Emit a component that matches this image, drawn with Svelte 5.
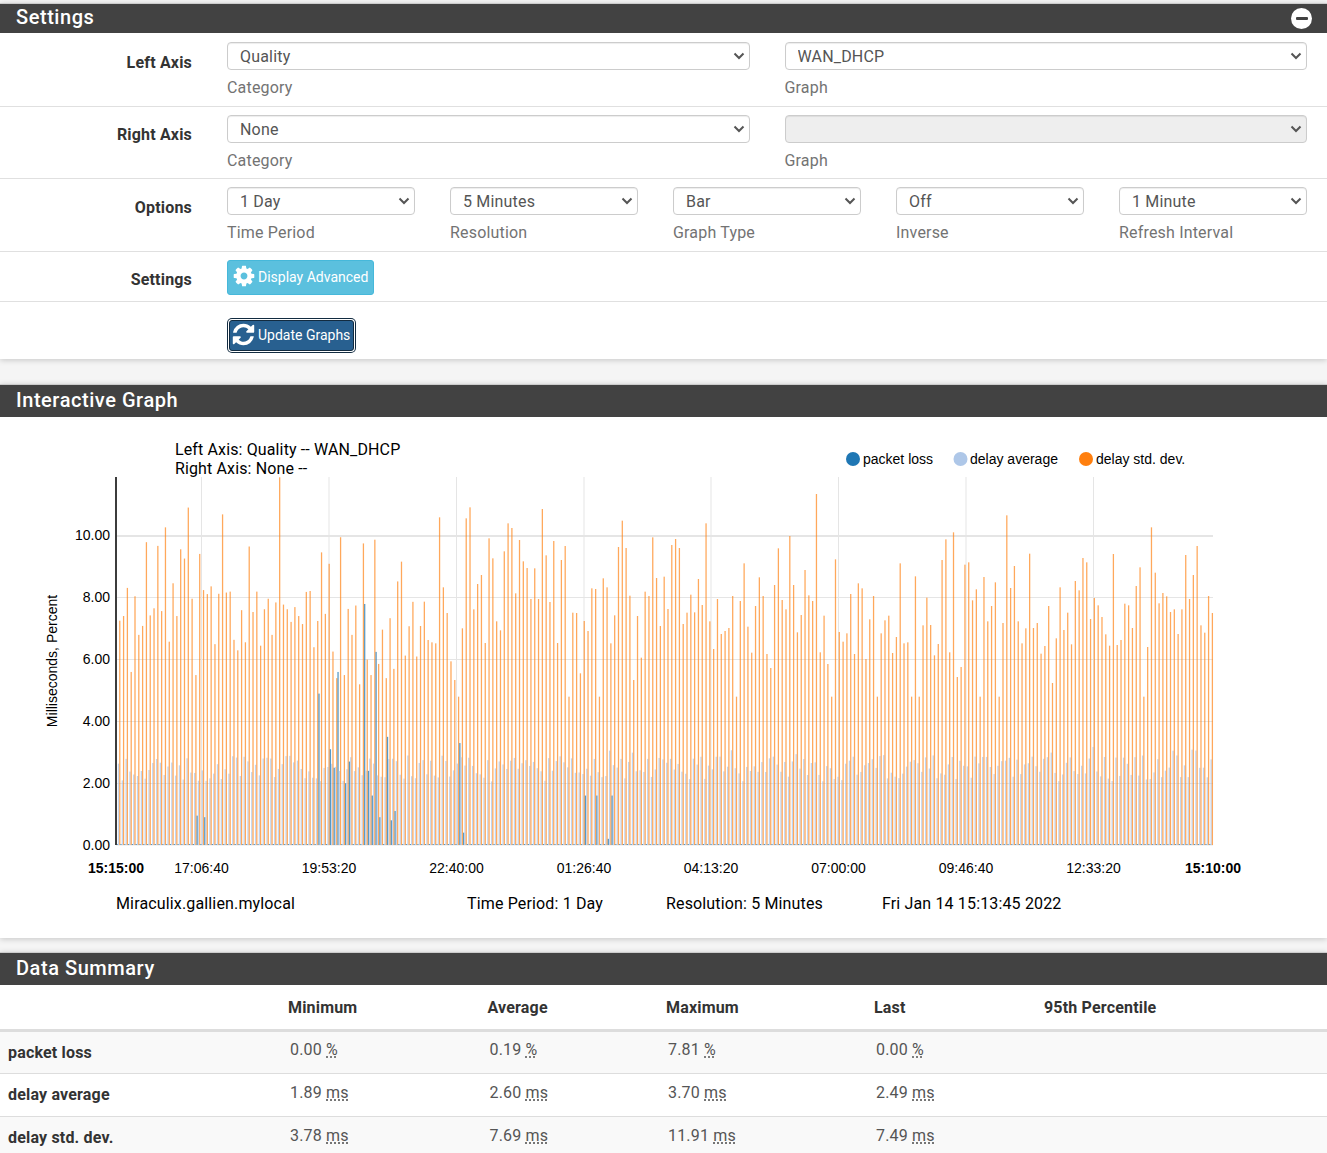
<script>
  const X0 = 116.6, STEP = 3.807, Y0 = 845, PX = 30.9, N = 288, TOP = 477;

  let seed = 20220114;
  function rnd() {
    seed = (seed + 0x6d2b79f5) | 0;
    let t = Math.imul(seed ^ (seed >>> 15), 1 | seed);
    t = (t + Math.imul(t ^ (t >>> 7), 61 | t)) ^ t;
    return ((t ^ (t >>> 14)) >>> 0) / 4294967296;
  }

  const firstOrange = [7.26,7.41,8.32,5.6,8.05,6.8,7.09,9.8,7.43,7.66,9.68,7.57,10.28,6.58,8.47,7.41,9.57,9.27,10.92,7.97,5.5,9.42,8.25,8.12,8.37,6.5,8.13,10.7,8.17,8.2,6.64,6.3,7.6,6.56,9.66,7.54,8.2,6.45,7.63,7.97,6.8,7.85,11.9,7.78,7.63,7.22,7.7,7.41,7.15,8.19,8.22,6.4,7.25,9.47,7.48,9.1,6.26,5.4,9.96,5.5,7.64,6.8,7.75,5.2,9.76,6.0,5.5,9.88,5.86,6.97,5.4,7.34,5.7,8.53,9.17,6.13,7.08,7.87,6.1];
  // Bar tops from index 79 on, 0 stands for a bar lower than the rest.
  const tops = [408,335,450,457,460,82,292,369,514,570,0,415,85,52,358,282,255,459,145,205,394,421,184,100,114,310,150,214,234,327,235,327,57,196,336,153,459,210,168,0,368,369,550,393,423,295,297,0,265,292,460,376,171,92,174,317,570,378,503,305,318,142,264,408,260,357,165,147,174,402,
    368,314,367,267,345,100,394,477,327,432,423,414,318,0,333,220,410,488,348,262,318,492,534,285,175,330,358,138,285,427,375,240,316,333,12,487,377,522,0,208,426,455,430,312,492,280,295,507,388,318,0,430,391,377,489,441,220,460,457,0,259,0,406,323,405,496,462,210,148,487,127,
    561,531,224,217,331,298,0,261,394,348,277,0,399,76,294,228,394,460,415,191,414,399,491,468,348,579,445,292,420,368,463,273,301,204,217,387,324,346,381,433,467,192,465,450,341,346,414,288,232,0,471,112,248,340,309,319,366,358,432,358,195,327,255,168,406,428,318,369];
  const orange = [...firstOrange, ...tops.map((y) => (1065 - (y || 620)) / 92.7)];
  const blues = { 199: 0.95, 203: 0.9, 318.5: 4.9, 330: 3.1, 334: 2.5, 338: 5.6, 345: 2.0, 349: 2.7, 363.5: 7.8, 367: 2.4, 371: 1.6, 376: 6.25, 380: 0.9, 387: 3.5, 391: 0.8, 395: 1.1, 459: 3.3, 462: 0.4, 585: 1.6, 595: 1.6, 610: 0.2, 614: 1.6 };

  const bars = [];
  for (let i = 0; i < N; i++) {
    const x = X0 + i * STEP;
    const g = 2.05 + rnd() * 0.85 + (rnd() > 0.9 ? 0.35 : 0);
    let b = 0;
    for (const k in blues) if (Math.abs(+k - x - 0.6) < STEP / 2) b = blues[k];
    bars.push({ x, b, g, o: orange[i] });
  }
  const h = (v) => Math.max(v * PX, 1);
  const W = 1.27;

  const yTicks = ['10.00', '8.00', '6.00', '4.00', '2.00', '0.00'];
  const yPos = [536, 597.5, 659.5, 721.5, 783.5, 845];
  const yText = [540, 602, 664, 726, 788, 849.5];
  const xTicks = [[201.5, '17:06:40'], [329, '19:53:20'], [456.5, '22:40:00'], [584, '01:26:40'], [711, '04:13:20'], [838.5, '07:00:00'], [966, '09:46:40'], [1093.5, '12:33:20']];

  const options = [['1 Day', 'Time Period'], ['5 Minutes', 'Resolution'], ['Bar', 'Graph Type'], ['Off', 'Inverse'], ['1 Minute', 'Refresh Interval']];
  const rows = [
    ['packet loss', '0.00', '0.19', '7.81', '0.00', '%'],
    ['delay average', '1.89', '2.60', '3.70', '2.49', 'ms'],
    ['delay std. dev.', '3.78', '7.69', '11.91', '7.49', 'ms']
  ];
</script>

<div class="page">
  <section class="panel first">
    <header class="title">
      <h2>Settings</h2>
      <span class="collapse" aria-label="Collapse"><i></i></span>
    </header>

    <div class="row r1">
      <div class="label">Left Axis</div>
      <div class="fields two">
        <div class="field"><select><option>Quality</option></select><span class="help">Category</span></div>
        <div class="field"><select><option>WAN_DHCP</option></select><span class="help">Graph</span></div>
      </div>
    </div>
    <div class="row r2">
      <div class="label">Right Axis</div>
      <div class="fields two">
        <div class="field"><select><option>None</option></select><span class="help">Category</span></div>
        <div class="field"><select class="off"><option></option></select><span class="help">Graph</span></div>
      </div>
    </div>
    <div class="row r3">
      <div class="label">Options</div>
      <div class="fields five">
        {#each options as [v, help]}
          <div class="field"><select><option>{v}</option></select><span class="help">{help}</span></div>
        {/each}
      </div>
    </div>
    <div class="row r4">
      <div class="label">Settings</div>
      <div class="fields">
        <button class="btn info">
          <svg viewBox="0 0 1792 1792" width="24" height="24"><path fill="currentColor" d="M1152 896q0-106-75-181t-181-75-181 75-75 181 75 181 181 75 181-75 75-181zm512-109v222q0 12-8 23t-20 13l-185 28q-19 54-39 91 35 50 107 138 10 12 10 25t-9 23q-27 37-99 108t-94 71q-12 0-26-9l-138-108q-44 23-91 38-16 136-29 186-7 28-36 28h-222q-14 0-24.500-8.500t-11.500-21.500l-28-184q-49-16-90-37l-141 107q-10 9-25 9-14 0-25-11-126-114-165-168-7-10-7-23 0-12 8-23 15-21 51-66.500t54-70.500q-27-50-41-99l-183-27q-13-2-21-12.500t-8-23.500v-222q0-12 8-23t19-13l186-28q14-46 39-92-40-57-107-138-10-12-10-24 0-10 9-23 26-36 98.500-107.500t94.500-71.500q13 0 26 10l138 107q44-23 91-38 16-136 29-186 7-28 36-28h222q14 0 24.500 8.500t11.500 21.500l28 184q49 16 90 37l142-107q9-9 24-9 13 0 25 10 129 119 165 170 7 8 7 22 0 12-8 23-15 21-51 66.500t-54 70.500q26 50 41 98l183 28q13 2 21 12.500t8 23.500z"/></svg>
          <span>Display Advanced</span>
        </button>
      </div>
    </div>
    <div class="row r5">
      <div class="label"></div>
      <div class="fields">
        <button class="btn primary">
          <svg viewBox="0 0 1792 1792" width="25" height="25"><path fill="currentColor" d="M1639 1056q0 5-1 7-64 268-268 434.500t-478 166.500q-146 0-282.500-55t-243.500-157l-129 129q-19 19-45 19t-45-19-19-45v-448q0-26 19-45t45-19h448q26 0 45 19t19 45-19 45l-137 137q71 66 161 102t187 36q134 0 250-65t186-179q11-17 53-117 8-23 30-23h192q13 0 22.500 9.500t9.500 22.500zm25-800v448q0 26-19 45t-45 19h-448q-26 0-45-19t-19-45 19-45l138-138q-148-137-349-137-134 0-250 65t-186 179q-11 17-53 117-8 23-30 23h-199q-13 0-22.500-9.500t-9.500-22.500v-7q65-268 270-434.500t480-166.500q146 0 284 55.500t245 156.500l130-129q19-19 45-19t45 19 19 45z"/></svg>
          <span>Update Graphs</span>
        </button>
      </div>
    </div>
  </section>

  <section class="panel graph">
    <header class="title"><h2>Interactive Graph</h2></header>
    <svg class="chart" viewBox="0 417 1327 521" width="1327" height="521">
      <text class="cap" x="175" y="455">Left Axis: Quality -- WAN_DHCP</text>
      <text class="cap" x="175" y="474">Right Axis: None --</text>

      <circle cx="853" cy="459" r="7" fill="#1f77b4" />
      <text class="ax" x="863" y="464">packet loss</text>
      <circle cx="960.500" cy="459" r="7" fill="#aec7e8" />
      <text class="ax" x="970" y="464">delay average</text>
      <circle cx="1086" cy="459" r="7" fill="#ff7f0e" />
      <text class="ax" x="1096" y="464">delay std. dev.</text>

      {#each yPos as y, i}
        <line x1="116" x2="1213" y1={y} y2={y} class="grid" class:thick={i === 0} />
        <text class="ax" x="110" y={yText[i]} text-anchor="end">{yTicks[i]}</text>
      {/each}
      {#each xTicks as [x, t]}
        <line x1={x} x2={x} y1={TOP} y2="845" class="grid" />
        <text class="ax" {x} y="873" text-anchor="middle">{t}</text>
      {/each}
      <text class="ax bold" x="116" y="873" text-anchor="middle">15:15:00</text>
      <text class="ax bold" x="1213" y="873" text-anchor="middle">15:10:00</text>

      <text class="ax" transform="translate(57 661) rotate(-90)" text-anchor="middle">Milliseconds, Percent</text>

      {#each bars as b}
        <rect x={b.x} y={Y0 - h(b.b)} width={W} height={h(b.b)} fill="#1f77b4" fill-opacity=".75" />
        <rect x={b.x + W} y={Y0 - h(b.g)} width={W} height={h(b.g)} fill="#aec7e8" fill-opacity=".75" />
        <rect x={b.x + 2 * W} y={Math.max(Y0 - h(b.o), TOP)} width={W} height={Math.min(h(b.o), Y0 - TOP)} fill="#ff7f0e" fill-opacity=".68" />
      {/each}
      <line x1="116" x2="116" y1={TOP} y2="845" class="axis" />

      <text class="foot" x="116" y="909">Miraculix.gallien.mylocal</text>
      <text class="foot" x="467" y="909">Time Period: 1 Day</text>
      <text class="foot" x="666" y="909">Resolution: 5 Minutes</text>
      <text class="foot" x="882" y="909">Fri Jan 14 15:13:45 2022</text>
    </svg>
  </section>

  <section class="panel summary">
    <header class="title"><h2>Data Summary</h2></header>
    <table>
      <colgroup>
        <col class="c1" /><col class="c2" /><col class="c3" /><col class="c4" /><col class="c5" /><col />
      </colgroup>
      <thead>
        <tr><th></th><th>Minimum</th><th>Average</th><th>Maximum</th><th>Last</th><th>95th Percentile</th></tr>
      </thead>
      <tbody>
        {#each rows as r}
          <tr>
            <th>{r[0]}</th>
            {#each r.slice(1, 5) as v}
              <td>{v} <abbr>{r[5]}</abbr></td>
            {/each}
            <td></td>
          </tr>
        {/each}
      </tbody>
    </table>
  </section>
</div>

<style>
  :global(body) {
    margin: 0;
    background: #f5f5f5;
    font-family: Roboto, "Liberation Sans", sans-serif;
    color: #333;
    letter-spacing: 0.18px;
  }
  .page {
    height: 1153px;
    overflow: hidden;
    padding-top: 3px;
    box-sizing: border-box;
  }
  .panel {
    background: #fff;
    box-shadow: 0 1px 6px rgba(0, 0, 0, 0.2);
  }
  .graph {
    margin-top: 25px;
  }
  .summary {
    margin-top: 14px;
  }
  .title {
    height: 33px;
    box-sizing: border-box;
    background: #424242;
    color: #fff;
    display: flex;
    align-items: center;
    justify-content: space-between;
    padding: 0 16px 3px;
    border-top: 1px solid #ccc;
  }
  .first .title {
    height: 30px;
    padding-bottom: 3px;
  }
  h2 {
    margin: 0;
    font-size: 20px;
    font-weight: 500;
    letter-spacing: 0.55px;
    line-height: 1;
  }
  .collapse {
    position: relative;
    top: 1px;
    width: 21px;
    height: 21px;
    border-radius: 50%;
    background: #fff;
    display: flex;
    align-items: center;
    justify-content: center;
    margin-right: -1px;
  }
  .collapse i {
    width: 12px;
    height: 3px;
    background: #424242;
    border-radius: 1px;
  }
  .row {
    display: flex;
    border-bottom: 1px solid #e0e0e0;
  }
  .r1 { height: 73px; }
  .r2 { height: 71px; }
  .r3 { height: 72px; }
  .r4 { height: 49px; }
  .r5 { height: 57px; border-bottom: 0; }
  .label {
    width: 192px;
    flex: none;
    text-align: right;
    font-weight: 700;
    font-size: 16px;
    line-height: 19px;
    padding-top: 19px;
    box-sizing: border-box;
  }
  .r1 .label { padding-top: 20px; }
  .r2 .label, .r4 .label { padding-top: 18px; }
  .fields {
    margin-left: 35px;
    margin-right: 20px;
    flex: 1;
    padding-top: 8px;
  }
  .r1 .fields { padding-top: 9px; }
  .r5 .fields { padding-top: 18px; }
  .two {
    display: grid;
    grid-template-columns: 1fr 1fr;
    gap: 35px;
  }
  .five {
    display: grid;
    grid-template-columns: repeat(5, 1fr);
    gap: 35px;
  }
  .field {
    display: flex;
    flex-direction: column;
    min-width: 0;
  }
  select {
    appearance: none;
    height: 28px;
    width: 100%;
    border: 1px solid #ccc;
    border-radius: 4px;
    background: #fff url("data:image/svg+xml,%3Csvg xmlns='http://www.w3.org/2000/svg' width='12' height='8'%3E%3Cpath d='M1.500 1.500 6 6l4.500-4.500' fill='none' stroke='%23555' stroke-width='2'/%3E%3C/svg%3E") no-repeat right 4px center;
    color: #555;
    font: 400 16px Roboto, sans-serif;
    letter-spacing: 0.18px;
    padding: 0 12px;
    box-shadow: inset 0 1px 1px rgba(0, 0, 0, 0.075);
  }
  select.off {
    background-color: #eee;
  }
  .help {
    color: #737373;
    font-size: 16px;
    line-height: 19px;
    margin-top: 8px;
  }
  .btn {
    display: flex;
    align-items: center;
    gap: 2px;
    font: 400 14px Roboto, sans-serif;
    color: #fff;
    border-radius: 3px;
    box-sizing: border-box;
    white-space: nowrap;
    padding: 0;
  }
  .btn span {
    position: relative;
    top: -1px;
  }
  .info {
    background: #5bc0de;
    border: 1px solid #46b8da;
    width: 147px;
    height: 35px;
    padding: 0 0 0 4px;
  }
  .info svg {
    position: relative;
    top: -2px;
  }
  .primary {
    background: #286090;
    border: 1px solid #122b40;
    box-shadow: 0 0 0 1px #fff, 0 0 0 2px #122b40;
    width: 125px;
    height: 31px;
    padding: 0 0 0 1px;
    margin-left: 2px;
  }
  .primary svg {
    position: relative;
    top: -1px;
  }
  .chart {
    display: block;
  }
  .chart text {
    fill: #000;
  }
  .cap {
    font: 400 16px Roboto, sans-serif;
    letter-spacing: 0.13px;
  }
  .ax {
    font: 400 14px "Liberation Sans", sans-serif;
    letter-spacing: 0;
  }
  .bold {
    font-weight: 700;
  }
  .foot {
    font: 400 16px Roboto, sans-serif;
    letter-spacing: 0.15px;
  }
  .grid {
    stroke: #e5e5e5;
    stroke-width: 1;
  }
  .grid.thick {
    stroke-width: 2;
  }
  .axis {
    stroke: #3c3c3c;
    stroke-width: 2;
  }
  table {
    width: 100%;
    border-collapse: collapse;
    table-layout: fixed;
    font-size: 16px;
  }
  .c1 { width: 280px; }
  .c2 { width: 199.5px; }
  .c3 { width: 178.5px; }
  .c4 { width: 208px; }
  .c5 { width: 170px; }
  thead th {
    text-align: left;
    padding: 2px 8px 0;
    height: 45px;
    border-bottom: 3px solid #ddd;
    font-weight: 700;
    box-sizing: border-box;
  }
  tbody th {
    text-align: left;
    padding: 0 8px;
    font-weight: 700;
  }
  tbody tr {
    height: 43px;
    border-bottom: 1px solid #ddd;
  }
  tbody tr:nth-child(odd) {
    background: #f9f9f9;
  }
  td {
    padding: 0 8px 5px 10px;
    color: #555;
  }
  abbr {
    text-decoration: underline dotted;
    text-underline-offset: 2px;
  }
</style>
